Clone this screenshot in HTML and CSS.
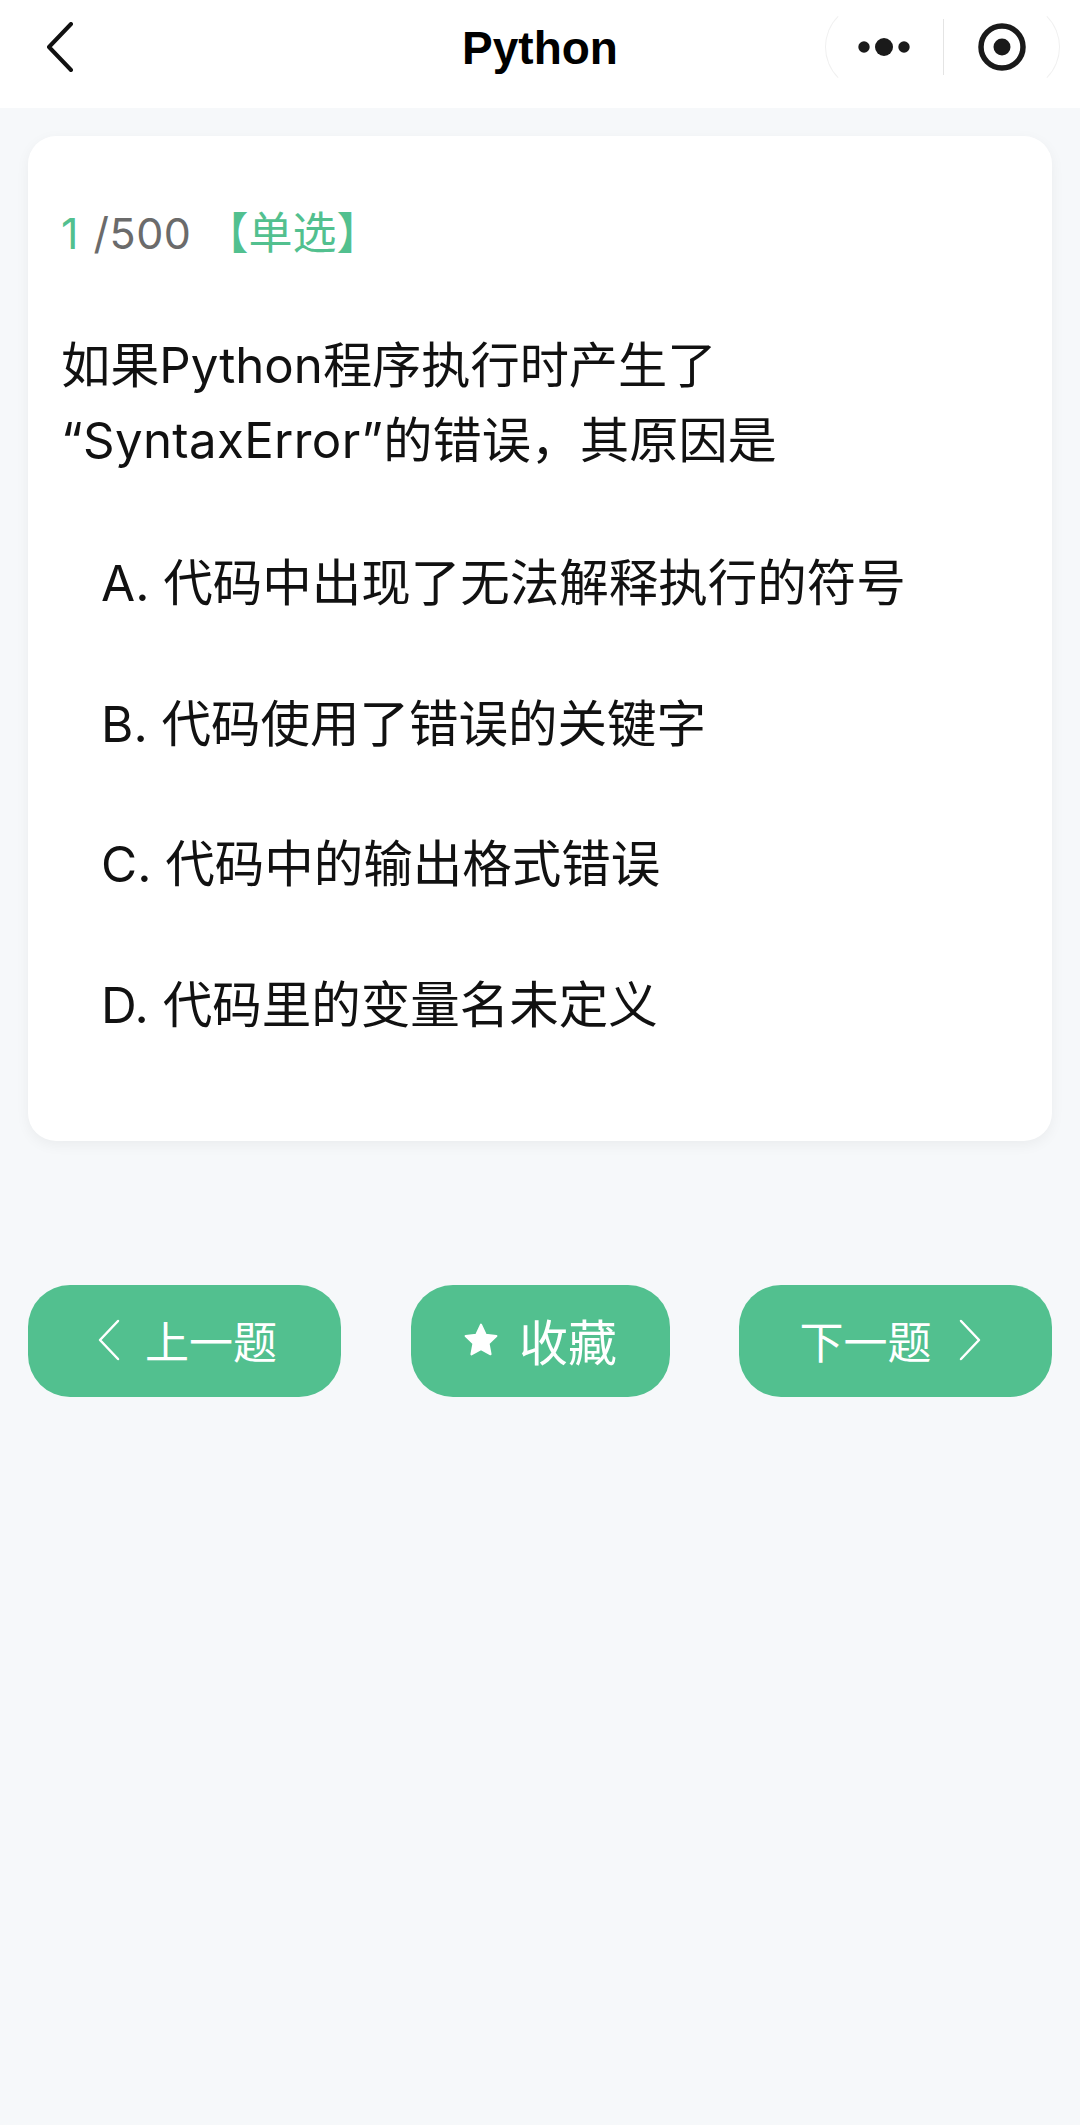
FILE: index.html
```html
<!DOCTYPE html>
<html lang="zh-CN">
<head>
<meta charset="utf-8">
<title>Python</title>
<link rel="stylesheet" href="styles.css">
</head>
<body>
<header class="topbar">
  <svg class="back" width="30" height="50" viewBox="0 0 30 50"><path d="M26 2 L4 25 L26 48"/></svg>
  <h1 class="title">Python</h1>
  <div class="capsule">
    <svg class="more" width="52" height="20" viewBox="0 0 52 20"><circle cx="6" cy="10" r="5.7"/><circle cx="26" cy="10" r="9"/><circle cx="46" cy="10" r="5.7"/></svg>
    <span class="divider"></span>
    <svg class="target" width="48" height="48" viewBox="0 0 48 48"><circle class="ring" cx="24" cy="24" r="21"/><circle cx="24" cy="24" r="8.5"/></svg>
  </div>
</header>
<main class="page">
  <section class="card">
    <div class="meta"><span class="accent">1</span> <span class="total">/500</span><span class="accent kind">【单选】</span></div>
    <p class="question">如果Python程序执行时产生了<span class="term">“SyntaxError”</span>的错误，其原因是</p>
    <ul class="options">
      <li>A. 代码中出现了无法解释执行的符号</li>
      <li>B. 代码使用了错误的关键字</li>
      <li>C. 代码中的输出格式错误</li>
      <li>D. 代码里的变量名未定义</li>
    </ul>
  </section>
  <nav class="actions">
    <button class="btn wide prev">
      <svg class="chev" width="24" height="42" viewBox="0 0 24 42"><path d="M21 2 L3 21 L21 40"/></svg>
      <span>上一题</span>
    </button>
    <button class="btn mid">
      <svg class="star" width="36" height="36" viewBox="0 0 34 34"><path d="M17 2.5 L21.4 12 L31.5 13.3 L24.1 20.3 L26 30.5 L17 25.5 L8 30.5 L9.9 20.3 L2.5 13.3 L12.6 12 Z"/></svg>
      <span class="fav">收藏</span>
    </button>
    <button class="btn wide next">
      <span>下一题</span>
      <svg class="chev" width="24" height="42" viewBox="0 0 24 42"><path d="M3 2 L21 21 L3 40"/></svg>
    </button>
  </nav>
</main>
</body>
</html>
```
FILE: styles.css
```css
* { box-sizing: border-box; }
html, body { margin: 0; padding: 0; }
body {
  width: 1080px;
  min-height: 2125px;
  background: #f6f8fa;
  font-family: Inter, "Noto Sans CJK SC", sans-serif;
  color: #111;
}
.topbar {
  height: 108px;
  background: #fff;
  display: flex;
  align-items: center;
  justify-content: space-between;
  padding: 0 20px 0 45px;
  position: relative;
}
.back { fill: none; stroke: #111; stroke-width: 4; stroke-linecap: round; stroke-linejoin: round; margin-top: -14px; }
.title {
  position: absolute;
  left: 0;
  right: 0;
  top: 0;
  margin: 0;
  text-align: center;
  font-family: "Liberation Sans", Arial, sans-serif;
  font-size: 46px;
  font-weight: 700;
  line-height: 96px;
  color: #000;
  pointer-events: none;
}
.capsule {
  width: 235px;
  height: 88px;
  margin-top: -14px;
  border: 1px solid;
  border-color: transparent #f0f0f0;
  border-radius: 44px;
  display: flex;
  align-items: center;
  padding-left: 32px;
  position: relative;
}
.more { fill: #1a1a1a; }
.divider { width: 1px; height: 56px; background: #e4e4e4; margin-left: 33px; }
.target { fill: #1a1a1a; margin-left: 34px; }
.target .ring { fill: none; stroke: #1a1a1a; stroke-width: 5.5; }
.page { padding: 28px 28px 0; }
.card {
  height: 1005px;
  background: #fff;
  border-radius: 28px;
  box-shadow: 0 4px 14px rgba(0, 0, 0, .05);
  padding: 66px 33px 0;
}
.meta { font-size: 43px; line-height: 62px; white-space: nowrap; }
.accent { color: #52c08f; }
.total { color: #6b6b6b; margin-left: 3px; letter-spacing: .5px; }
.kind { margin-left: 13px; font-size: 44px; }
.question {
  margin: 64px 0 0;
  width: 760px;
  font-size: 49.2px;
  line-height: 75px;
  color: #111;
}
.term { letter-spacing: .35px; }
.options { list-style: none; margin: 35px 0 0; padding: 0 0 0 40px; }
.options li { height: 140.5px; font-size: 49.5px; line-height: 140px; white-space: nowrap; }
.actions { display: flex; justify-content: space-between; margin-top: 144px; }
.btn {
  height: 112px;
  border: 0;
  border-radius: 42px;
  background: #52c08f;
  color: #fff;
  font-family: inherit;
  font-size: 44px;
  display: flex;
  align-items: center;
  justify-content: center;
  padding: 0 0 3px;
}
.wide { width: 313px; gap: 24px; }
.prev { padding-left: 5px; }
.next { padding-right: 10px; gap: 26px; }
.mid { width: 259px; gap: 20px; }
.fav { font-size: 49px; }
.chev { fill: none; stroke: #fff; stroke-width: 2.5; stroke-linecap: round; stroke-linejoin: round; }
.star { fill: #fff; stroke: #fff; stroke-width: 2; stroke-linejoin: round; }
```
